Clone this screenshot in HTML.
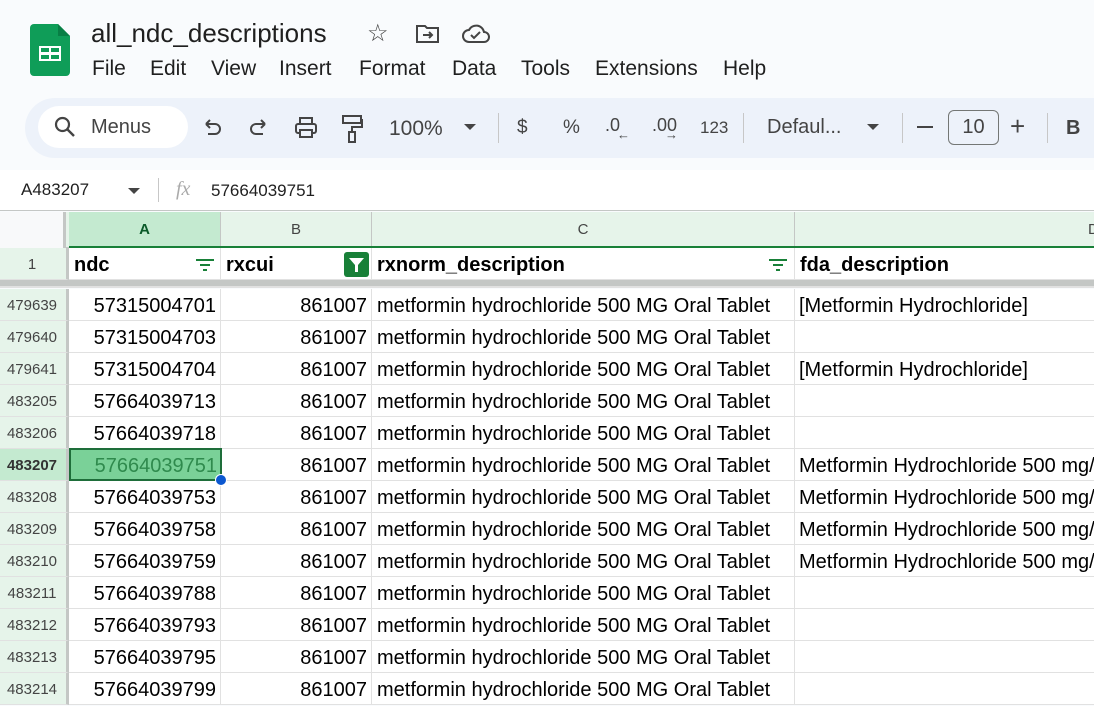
<!DOCTYPE html>
<html><head><meta charset="utf-8"><style>
*{margin:0;padding:0;box-sizing:border-box}
body{width:1094px;height:692px;overflow:hidden;background:#f9fbfd;font-family:"Liberation Sans",Arial,sans-serif;position:relative;color:#1f1f1f}
.a{position:absolute;white-space:nowrap}
.tb{position:absolute;left:25px;top:98px;width:1100px;height:60px;background:#edf2fa;border-radius:30px}
.cell{position:absolute;height:32px;border-right:1px solid #e1e1e1;border-bottom:1px solid #e1e1e1;background:#fff;font-size:20px;line-height:35px;white-space:nowrap;overflow:hidden;color:#000}
.rh{position:absolute;left:0;width:69px;height:32px;background:#e6f4ea;border-right:3px solid #c4c7c5;border-bottom:1px solid #e1e1e1;font-size:15px;line-height:33px;text-align:center;color:#444;padding-right:2px}
</style></head><body>
<svg class="a" style="left:30px;top:24px" width="40" height="52" viewBox="0 0 40 52"><path d="M4 0h24l12 12v36a4 4 0 0 1-4 4H4a4 4 0 0 1-4-4V4a4 4 0 0 1 4-4z" fill="#0f9d58"/><path d="M28 0v12h12z" fill="#087f45"/><rect x="9" y="22" width="22" height="15" fill="#fff"/><rect x="11" y="24" width="8" height="4" fill="#0f9d58"/><rect x="21" y="24" width="8" height="4" fill="#0f9d58"/><rect x="11" y="31" width="8" height="4" fill="#0f9d58"/><rect x="21" y="31" width="8" height="4" fill="#0f9d58"/></svg>
<div class="a" style="left:91px;top:18px;font-size:26px">all_ndc_descriptions</div>
<div class="a" style="left:367px;top:19px;font-size:24px;color:#444">☆</div>
<svg class="a" style="left:415px;top:24px" width="26" height="20" viewBox="0 0 26 20"><path d="M2 2h8l2 2h11v14H2z" fill="none" stroke="#444" stroke-width="2"/><path d="M8 11h9M14 8l3 3-3 3" fill="none" stroke="#444" stroke-width="2"/></svg>
<svg class="a" style="left:461px;top:22px" width="30" height="22" viewBox="0 0 30 22"><path d="M8 20a6 6 0 0 1 0-12 8 8 0 0 1 15 2 5 5 0 0 1 0 10z" fill="none" stroke="#444" stroke-width="2"/><path d="M10 13l3 3 6-6" fill="none" stroke="#444" stroke-width="2"/></svg>
<div class="a" style="left:92px;top:57px;font-size:21px">File</div>
<div class="a" style="left:150px;top:57px;font-size:21px">Edit</div>
<div class="a" style="left:211px;top:57px;font-size:21px">View</div>
<div class="a" style="left:279px;top:57px;font-size:21px">Insert</div>
<div class="a" style="left:359px;top:57px;font-size:21px">Format</div>
<div class="a" style="left:452px;top:57px;font-size:21px">Data</div>
<div class="a" style="left:521px;top:57px;font-size:21px">Tools</div>
<div class="a" style="left:595px;top:57px;font-size:21px">Extensions</div>
<div class="a" style="left:723px;top:57px;font-size:21px">Help</div>
<div class="tb"></div>
<div class="a" style="left:38px;top:106px;width:150px;height:42px;background:#fff;border-radius:21px"></div>
<svg class="a" style="left:53px;top:115px" width="24" height="24" viewBox="0 0 24 24"><circle cx="9.5" cy="9.5" r="6.5" fill="none" stroke="#444" stroke-width="2.2"/><path d="M14 14l7 7" stroke="#444" stroke-width="2.4"/></svg>
<div class="a" style="left:91px;top:116px;font-size:20px;color:#444">Menus</div>
<svg class="a" style="left:200px;top:116px" width="24" height="24" viewBox="0 0 24 24"><path d="M6 8h9a5 5 0 0 1 0 10H8M6 8l4-4M6 8l4 4" fill="none" stroke="#444" stroke-width="2"/></svg>
<svg class="a" style="left:247px;top:116px" width="24" height="24" viewBox="0 0 24 24"><path d="M18 8H9a5 5 0 0 0 0 10h7M18 8l-4-4M18 8l-4 4" fill="none" stroke="#444" stroke-width="2"/></svg>
<svg class="a" style="left:293px;top:115px" width="26" height="26" viewBox="0 0 26 26"><rect x="7" y="3" width="12" height="6" fill="none" stroke="#444" stroke-width="2"/><rect x="3" y="9" width="20" height="9" rx="2" fill="none" stroke="#444" stroke-width="2"/><rect x="7" y="15" width="12" height="7" fill="#edf2fa" stroke="#444" stroke-width="2"/></svg>
<svg class="a" style="left:340px;top:114px" width="24" height="30" viewBox="0 0 24 30"><rect x="3" y="2" width="18" height="7" fill="none" stroke="#444" stroke-width="2"/><path d="M21 6h1v7H12v5" fill="none" stroke="#444" stroke-width="2"/><rect x="9" y="18" width="6" height="10" fill="none" stroke="#444" stroke-width="2"/></svg>
<div class="a" style="left:389px;top:117px;font-size:21px;color:#444">100%</div>
<div class="a" style="left:464px;top:124px;width:0;height:0;border-left:6px solid transparent;border-right:6px solid transparent;border-top:6px solid #444"></div>
<div class="a" style="left:498px;top:113px;width:1px;height:30px;background:#c7c7c7"></div>
<div class="a" style="left:517px;top:117px;font-size:19px;color:#444">$</div>
<div class="a" style="left:563px;top:117px;font-size:19px;color:#444">%</div>
<div class="a" style="left:605px;top:115px;font-size:18px;color:#444">.0</div>
<div class="a" style="left:617px;top:127px;font-size:13px;color:#444">←</div>
<div class="a" style="left:652px;top:115px;font-size:18px;color:#444">.00</div>
<div class="a" style="left:665px;top:127px;font-size:13px;color:#444">→</div>
<div class="a" style="left:700px;top:118px;font-size:17px;color:#444">123</div>
<div class="a" style="left:743px;top:113px;width:1px;height:30px;background:#c7c7c7"></div>
<div class="a" style="left:767px;top:116px;font-size:20px;color:#444">Defaul...</div>
<div class="a" style="left:867px;top:124px;width:0;height:0;border-left:6px solid transparent;border-right:6px solid transparent;border-top:6px solid #444"></div>
<div class="a" style="left:902px;top:113px;width:1px;height:30px;background:#c7c7c7"></div>
<div class="a" style="left:917px;top:126px;width:16px;height:2px;background:#444"></div>
<div class="a" style="left:948px;top:110px;width:51px;height:35px;border:1px solid #747775;border-radius:6px;font-size:20px;line-height:33px;text-align:center;color:#444">10</div>
<div class="a" style="left:1010px;top:111px;font-size:26px;color:#444">+</div>
<div class="a" style="left:1047px;top:113px;width:1px;height:30px;background:#c7c7c7"></div>
<div class="a" style="left:1066px;top:117px;font-size:20px;font-weight:bold;color:#444">B</div>
<div class="a" style="left:0;top:170px;width:1094px;height:41px;background:#fff;border-bottom:1px solid #c4c7c5"></div>
<div class="a" style="left:21px;top:180px;font-size:17px">A483207</div>
<div class="a" style="left:128px;top:188px;width:0;height:0;border-left:6px solid transparent;border-right:6px solid transparent;border-top:6px solid #444"></div>
<div class="a" style="left:158px;top:178px;width:1px;height:24px;background:#c7c7c7"></div>
<div class="a" style="left:176px;top:178px;font-size:20px;font-style:italic;font-family:'Liberation Serif',serif;color:#aaa">fx</div>
<div class="a" style="left:211px;top:181px;font-size:17px">57664039751</div>
<div class="a" style="left:0;top:212px;width:1094px;height:36px;background:#e6f4ea;border-bottom:1px solid #c4c7c5"></div>
<div class="a" style="left:0;top:212px;width:66px;height:36px;background:#f8f9fa;border-right:3px solid #c4c7c5"></div>
<div class="a" style="left:69px;top:212px;width:152px;height:36px;background:#c4ead0;border-right:1px solid #c4c7c5;text-align:center;line-height:36px;font-size:15px;font-weight:bold;color:#0b5a29">A</div>
<div class="a" style="left:221px;top:212px;width:151px;height:36px;border-right:1px solid #c4c7c5;text-align:center;line-height:36px;font-size:15px;color:#444">B</div>
<div class="a" style="left:372px;top:212px;width:423px;height:36px;border-right:1px solid #c4c7c5;text-align:center;line-height:36px;font-size:15px;color:#444">C</div>
<div class="a" style="left:1088px;top:212px;line-height:36px;font-size:15px;color:#444">D</div>
<div class="a" style="left:69px;top:246px;width:1025px;height:2px;background:#188038"></div>
<div class="rh" style="top:248px">1</div>
<div class="cell" style="left:69px;top:248px;width:152px;font-weight:bold;padding-left:5px">ndc</div>
<svg class="a" style="left:195px;top:258px" width="20" height="14" viewBox="0 0 20 14"><path d="M1 2h18M5 7h10M8 12h4" stroke="#188038" stroke-width="2"/></svg>
<div class="cell" style="left:221px;top:248px;width:151px;font-weight:bold;padding-left:5px">rxcui</div>
<svg class="a" style="left:344px;top:252px" width="25" height="25" viewBox="0 0 25 25"><rect width="25" height="25" rx="3" fill="#188038"/><path d="M5 6h15l-6 7v7h-3v-7z" fill="#fff"/></svg>
<div class="cell" style="left:372px;top:248px;width:423px;font-weight:bold;padding-left:5px">rxnorm_description</div>
<svg class="a" style="left:768px;top:258px" width="20" height="14" viewBox="0 0 20 14"><path d="M1 2h18M5 7h10M8 12h4" stroke="#188038" stroke-width="2"/></svg>
<div class="cell" style="left:795px;top:248px;width:300px;font-weight:bold;padding-left:5px">fda_description</div>
<div class="a" style="left:0;top:280px;width:1094px;height:8px;background:#c4c7c5;border-bottom:2px solid #e1e1e1"></div>
<div id="rows"></div>
<script>
var d=[["479639","57315004701","[Metformin Hydrochloride]"],["479640","57315004703",""],["479641","57315004704","[Metformin Hydrochloride]"],["483205","57664039713",""],["483206","57664039718",""],["483207","57664039751","Metformin Hydrochloride 500 mg/"],["483208","57664039753","Metformin Hydrochloride 500 mg/"],["483209","57664039758","Metformin Hydrochloride 500 mg/"],["483210","57664039759","Metformin Hydrochloride 500 mg/"],["483211","57664039788",""],["483212","57664039793",""],["483213","57664039795",""],["483214","57664039799",""]];
var h="";
d.forEach(function(r,i){var t=289+32*i;var sel=i==5;
h+='<div class="rh" style="top:'+t+'px;'+(sel?'background:#c4ead0;font-weight:bold;color:#333':'')+'">'+r[0]+'</div>';
h+='<div class="cell" style="left:69px;top:'+t+'px;width:152px;text-align:right;padding-right:4px">'+r[1]+'</div>';
h+='<div class="cell" style="left:221px;top:'+t+'px;width:151px;text-align:right;padding-right:4px">861007</div>';
h+='<div class="cell" style="left:372px;top:'+t+'px;width:423px;padding-left:5px">metformin hydrochloride 500 MG Oral Tablet</div>';
h+='<div class="cell" style="left:795px;top:'+t+'px;width:300px;padding-left:4px;border-right:none">'+r[2]+'</div>';});
h+='<div class="a" style="left:69px;top:448px;width:153px;height:33px;border:2px solid #1e6e3a;background:#7ad198;font-size:20px;line-height:33px;text-align:right;padding-right:3px;color:#2f8a4d">57664039751</div>';
h+='<div class="a" style="left:215px;top:474px;width:12px;height:12px;border-radius:50%;background:#0b57d0;border:1px solid #fff"></div>';
document.getElementById("rows").innerHTML=h;
</script>
</body></html>
